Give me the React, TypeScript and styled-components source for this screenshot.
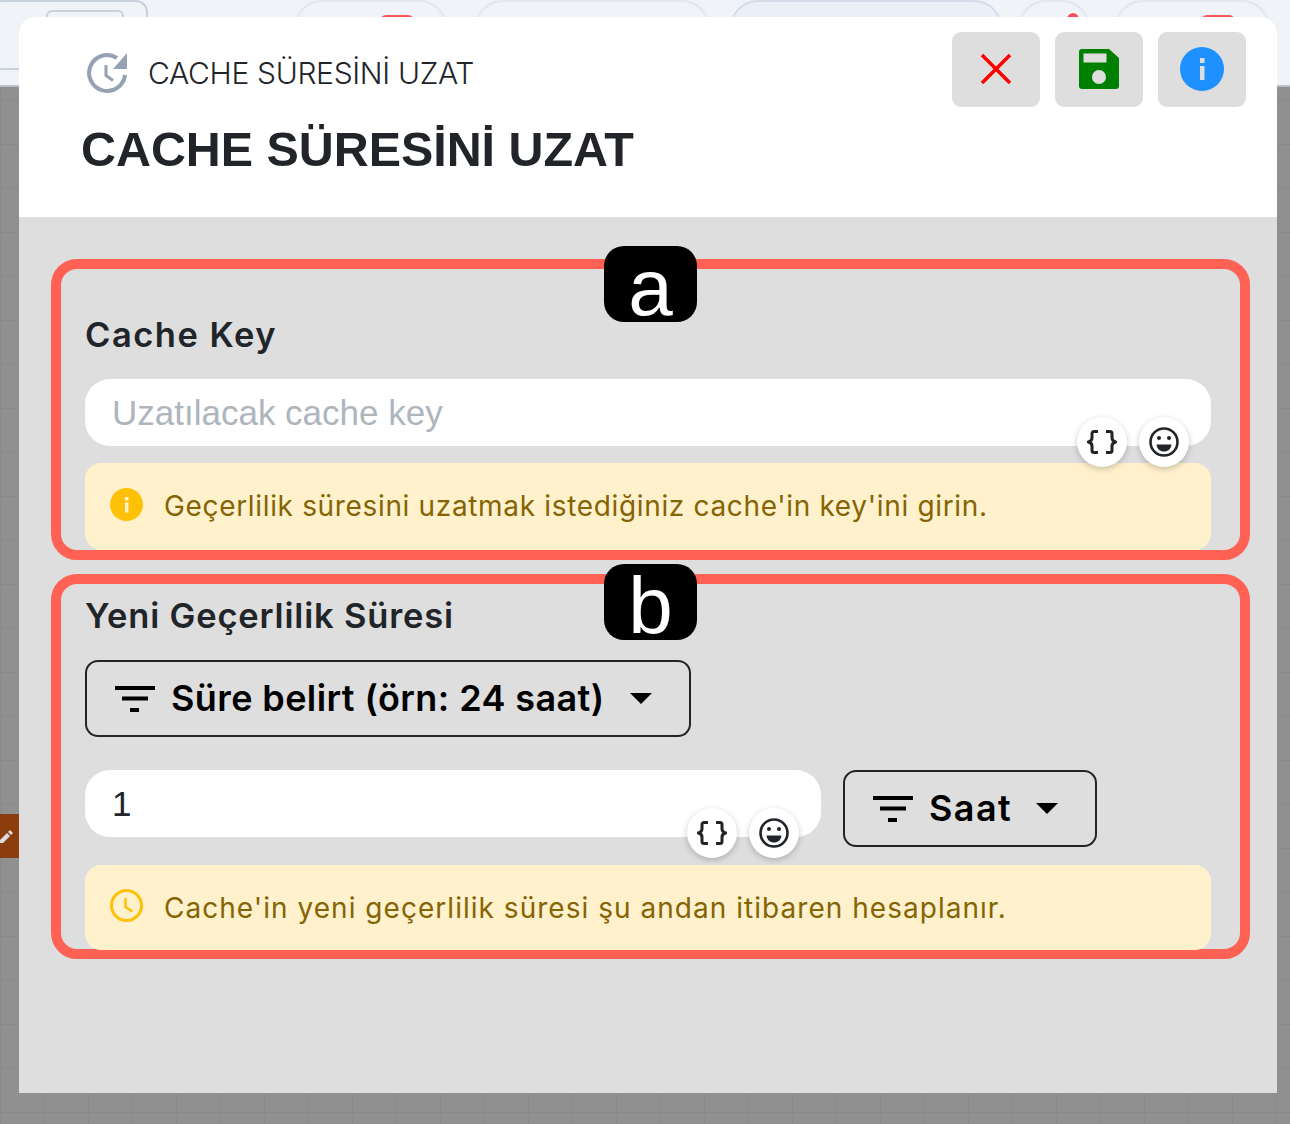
import React from "react";
import styled, { createGlobalStyle } from "styled-components";

const Global = createGlobalStyle`
  html, body { margin: 0; padding: 0; }
  body { width: 1290px; height: 1124px; overflow: hidden; font-family: "Inter", "Liberation Sans", sans-serif; }
  * { box-sizing: border-box; }
`;

const Page = styled.div`
  position: relative;
  width: 1290px;
  height: 1124px;
  display: flex;
  flex-direction: column;
  overflow: hidden;
  background-color: #909090;
  background-image:
    linear-gradient(#8a8a8a 1px, transparent 1px),
    linear-gradient(90deg, #8a8a8a 1px, transparent 1px);
  background-size: 44px 44px;
  background-position: 0 12px;
`;

const TopStrip = styled.div`
  position: relative;
  height: 87px;
  background: #f0f3f7;
  border-bottom: 2px solid #b9c2cd;
  display: flex;
  align-items: flex-start;
`;

const Tab = styled.div<{ $left: number; $width: number; $active?: boolean }>`
  position: absolute;
  top: 0;
  left: ${(p) => p.$left}px;
  width: ${(p) => p.$width}px;
  height: 60px;
  border: 2px solid ${(p) => (p.$active ? "#d3dce8" : "#e3e6ef")};
  border-radius: 28px;
  background: ${(p) => (p.$active ? "#eaf0f8" : "transparent")};
`;

const CornerPanel = styled.div`
  position: absolute;
  top: 0;
  left: -10px;
  width: 158px;
  height: 70px;
  border: 2px solid #c8d1dc;
  border-radius: 12px;
`;

const CornerInner = styled.div`
  position: absolute;
  top: 10px;
  left: 46px;
  width: 78px;
  height: 40px;
  border: 2px solid #c8d1dc;
  border-radius: 6px;
`;

const RedMark = styled.div<{ $left: number }>`
  position: absolute;
  top: 15px;
  left: ${(p) => p.$left}px;
  width: 34px;
  height: 8px;
  border-radius: 6px 6px 0 0;
  background: #f9565e;
`;

const RedDot = styled.div`
  position: absolute;
  top: 11px;
  left: 1065px;
  width: 16px;
  height: 16px;
  border-radius: 50%;
  background: #fb4f63;
  border: 2px solid #fff;
`;

const NodeTag = styled.div`
  position: absolute;
  left: 0;
  top: 814px;
  width: 19px;
  height: 44px;
  background: #8b3d0d;
  color: #ddd;
  display: flex;
  align-items: center;
  overflow: hidden;
`;

const Modal = styled.div`
  position: absolute;
  left: 19px;
  top: 17px;
  width: 1258px;
  height: 1076px;
  display: flex;
  flex-direction: column;
  background: #dedede;
  border-radius: 16px 16px 0 0;
  overflow: hidden;
`;

const Header = styled.header`
  height: 200px;
  flex: none;
  background: #fff;
  display: flex;
  justify-content: space-between;
  align-items: flex-start;
  padding: 15px 31px 0 62px;
`;

const HeaderText = styled.div`
  display: flex;
  flex-direction: column;
`;

const Crumb = styled.div`
  display: flex;
  align-items: center;
  gap: 20px;
  margin: 20px 0 0 6px;
  height: 42px;
  font-size: 30px;
  font-weight: 300;
  color: #212529;
  letter-spacing: -0.33px;
  white-space: nowrap;
`;

const Title = styled.h1`
  margin: 24px 0 0;
  font-family: "Liberation Sans", Arial, sans-serif;
  font-weight: 700;
  font-size: 48.4px;
  line-height: 62px;
  color: #212529;
  white-space: nowrap;
`;

const Actions = styled.div`
  display: flex;
  gap: 15px;
`;

const ActionButton = styled.button`
  width: 88px;
  height: 75px;
  border: 0;
  padding: 0 0 2px;
  border-radius: 9px;
  background: #dedede;
  display: flex;
  align-items: center;
  justify-content: center;
`;

const Body = styled.main`
  display: flex;
  flex-direction: column;
  gap: 14px;
  padding: 42px 27px 0 32px;
`;

const Section = styled.section<{ $height: number; $paddingTop: number }>`
  position: relative;
  height: ${(p) => p.$height}px;
  border: 10px solid #ff6154;
  border-radius: 26px;
  padding: ${(p) => p.$paddingTop}px 29px 0 24px;
  display: flex;
  flex-direction: column;
`;

const Badge = styled.div<{ $top: number }>`
  position: absolute;
  left: 543px;
  top: ${(p) => p.$top}px;
  width: 93px;
  height: 76px;
  border-radius: 20px;
  background: #000;
  color: #fff;
  font-family: "Liberation Sans", Arial, sans-serif;
  font-size: 80px;
  line-height: 84px;
  text-align: center;
`;

const Label = styled.div<{ $tracking: number }>`
  font-size: 34.5px;
  font-weight: 600;
  line-height: 44px;
  color: #212529;
  letter-spacing: ${(p) => p.$tracking}px;
  white-space: nowrap;
`;

const InputWrap = styled.div<{ $width?: number; $marginTop?: number }>`
  position: relative;
  height: 67px;
  flex: none;
  width: ${(p) => (p.$width ? `${p.$width}px` : "100%")};
  margin-top: ${(p) => p.$marginTop ?? 0}px;
  background: #fff;
  border-radius: 25px;
  padding: 0 27px;
  display: flex;
  align-items: center;
  font-family: "Liberation Sans", Arial, sans-serif;
  font-size: 35px;
  color: #212529;
`;

const Placeholder = styled.span`
  color: #adb5bd;
`;

const InputTools = styled.div`
  position: absolute;
  right: 22px;
  bottom: -21px;
  display: flex;
  gap: 12px;
`;

const ToolCircle = styled.div`
  width: 50px;
  height: 50px;
  border-radius: 50%;
  background: #fff;
  box-shadow: 0 2px 6px rgba(0, 0, 0, 0.22);
  display: flex;
  align-items: center;
  justify-content: center;
`;

const Alert = styled.div<{ $height: number; $marginTop: number }>`
  height: ${(p) => p.$height}px;
  flex: none;
  margin-top: ${(p) => p.$marginTop}px;
  padding: 0 25px 4px;
  background: #fff1cc;
  border-radius: 16px;
  display: flex;
  align-items: center;
  gap: 21px;
  color: #856404;
  font-size: 28px;
  white-space: nowrap;
`;

const AlertText = styled.span<{ $tracking: number; $marginTop: number }>`
  margin-top: ${(p) => p.$marginTop}px;
  letter-spacing: ${(p) => p.$tracking}px;
`;

const Select = styled.div<{ $width: number; $marginTop?: number; $tracking: number }>`
  width: ${(p) => p.$width}px;
  height: 77px;
  flex: none;
  margin-top: ${(p) => p.$marginTop ?? 0}px;
  border: 2px solid #212529;
  border-radius: 13px;
  display: flex;
  align-items: center;
  padding: 0 37px 0 28px;
  color: #000;
  font-size: 36px;
  font-weight: 600;
  letter-spacing: ${(p) => p.$tracking}px;
  white-space: nowrap;
`;

const SelectText = styled.span`
  flex: 1;
  margin-left: 16px;
  margin-top: -2px;
`;

const Caret = styled.span`
  width: 0;
  height: 0;
  border-left: 11px solid transparent;
  border-right: 11px solid transparent;
  border-top: 11px solid #000;
`;

const UnitRow = styled.div`
  display: flex;
  gap: 22px;
  margin-top: 33px;
  align-items: flex-start;
`;

const Clock = () => (
  <svg width="41" height="41" viewBox="0 0 41 41" fill="none">
    <path d="M38 22A18 18 0 1 1 30 5" stroke="#95a2b3" strokeWidth="4" />
    <path d="M40 0v16H26z" fill="#95a2b3" />
    <path d="M19 12v10.500l7 5" stroke="#95a2b3" strokeWidth="3" />
  </svg>
);

const XIcon = () => (
  <svg width="32" height="32" viewBox="0 0 32 32">
    <path d="M2 2l28 28M30 2L2 30" stroke="#f00" strokeWidth="3.5" />
  </svg>
);

const SaveIcon = () => (
  <svg width="40" height="40" viewBox="0 0 40 40">
    <path d="M3 0h27l10 9v28a3 3 0 0 1-3 3H3a3 3 0 0 1-3-3V3a3 3 0 0 1 3-3z" fill="#008000" />
    <rect x="4.500" y="4.500" width="23" height="9" fill="#dedede" />
    <circle cx="20" cy="28" r="7" fill="#dedede" />
  </svg>
);

const InfoIcon = () => (
  <svg width="44" height="44" viewBox="0 0 44 44">
    <circle cx="22" cy="22" r="22" fill="#1e90ff" />
    <rect x="20" y="11" width="4.500" height="5" fill="#dedede" />
    <rect x="20" y="19" width="4.500" height="14" fill="#dedede" />
  </svg>
);

const Braces = () => (
  <svg width="30" height="24" viewBox="0 0 30 24" fill="none" stroke="#212529" strokeWidth="3">
    <path d="M11 1.500H7A2 2 0 0 0 5 3.500V8c0 2-1 3.200-3.500 4C4 12.800 5 14 5 16v4.500a2 2 0 0 0 2 2h4" />
    <path d="M19 1.500h4a2 2 0 0 1 2 2V8c0 2 1 3.200 3.500 4-2.500.8-3.500 2-3.500 4v4.500a2 2 0 0 1-2 2h-4" />
  </svg>
);

const Smile = () => (
  <svg width="30" height="30" viewBox="0 0 30 30">
    <circle cx="15" cy="15" r="13.500" fill="none" stroke="#212529" strokeWidth="2.600" />
    <circle cx="10" cy="11" r="2" fill="#212529" />
    <circle cx="20" cy="11" r="2" fill="#212529" />
    <path d="M7.500 17.500h15c-.5 4.500-3.500 7-7.500 7s-7-2.500-7.500-7z" fill="#212529" />
  </svg>
);

const WarnInfo = () => (
  <svg width="33" height="33" viewBox="0 0 33 33">
    <circle cx="16.500" cy="16.500" r="16.500" fill="#ffc107" />
    <rect x="15" y="9" width="3.500" height="3.500" fill="#fff1cc" />
    <rect x="15" y="14.500" width="3.500" height="10" fill="#fff1cc" />
  </svg>
);

const WarnClock = () => (
  <svg width="33" height="33" viewBox="0 0 33 33" fill="none" stroke="#ffc107" strokeWidth="3">
    <circle cx="16.500" cy="16.500" r="15" />
    <path d="M15.500 9v9l7 4.500" strokeWidth="2.500" />
  </svg>
);

const FilterIcon = () => (
  <svg width="40" height="26" viewBox="0 0 40 26" fill="#000">
    <rect x="0" y="0" width="40" height="4" />
    <rect x="7" y="10.500" width="26" height="4" />
    <rect x="15" y="22" width="9" height="4" />
  </svg>
);

const Pencil = () => (
  <svg width="14" height="14" viewBox="0 0 14 14" fill="#ddd">
    <path d="M0 11l7-7 3 3-7 7H0zM8 3l2-2 3 3-2 2z" />
  </svg>
);

const Tools = () => (
  <InputTools>
    <ToolCircle><Braces /></ToolCircle>
    <ToolCircle><Smile /></ToolCircle>
  </InputTools>
);

export default function App() {
  return (
    <Page>
      <Global />
      <TopStrip>
        <CornerPanel />
        <CornerInner />
        <Tab $left={294} $width={153} />
        <Tab $left={475} $width={235} />
        <Tab $left={730} $width={272} $active />
        <Tab $left={1018} $width={72} />
        <Tab $left={1115} $width={155} />
        <RedMark $left={380} />
        <RedMark $left={1201} />
        <RedDot />
      </TopStrip>
      <NodeTag><Pencil /></NodeTag>
      <Modal>
        <Header>
          <HeaderText>
            <Crumb><Clock />CACHE SÜRESİNİ UZAT</Crumb>
            <Title>CACHE SÜRESİNİ UZAT</Title>
          </HeaderText>
          <Actions>
            <ActionButton aria-label="Kapat"><XIcon /></ActionButton>
            <ActionButton aria-label="Kaydet"><SaveIcon /></ActionButton>
            <ActionButton aria-label="Bilgi"><InfoIcon /></ActionButton>
          </Actions>
        </Header>
        <Body>
          <Section $height={301} $paddingTop={44}>
            <Badge $top={-23}>a</Badge>
            <Label $tracking={1.5}>Cache Key</Label>
            <InputWrap $marginTop={22}>
              <Placeholder>Uzatılacak cache key</Placeholder>
              <Tools />
            </InputWrap>
            <Alert $height={87} $marginTop={17}>
              <WarnInfo />
              <AlertText $tracking={0.66} $marginTop={3}>Geçerlilik süresini uzatmak istediğiniz cache'in key'ini girin.</AlertText>
            </Alert>
          </Section>
          <Section $height={385} $paddingTop={10}>
            <Badge $top={-20}>b</Badge>
            <Label $tracking={0.82}>Yeni Geçerlilik Süresi</Label>
            <Select $width={606} $marginTop={22} $tracking={0.4}>
              <FilterIcon />
              <SelectText>Süre belirt (örn: 24 saat)</SelectText>
              <Caret />
            </Select>
            <UnitRow>
              <InputWrap $width={736}>
                <span>1</span>
                <Tools />
              </InputWrap>
              <Select $width={254} $tracking={1.4}>
                <FilterIcon />
                <SelectText>Saat</SelectText>
                <Caret />
              </Select>
            </UnitRow>
            <Alert $height={85} $marginTop={18}>
              <WarnClock />
              <AlertText $tracking={1.03} $marginTop={5}>Cache'in yeni geçerlilik süresi şu andan itibaren hesaplanır.</AlertText>
            </Alert>
          </Section>
        </Body>
      </Modal>
    </Page>
  );
}
